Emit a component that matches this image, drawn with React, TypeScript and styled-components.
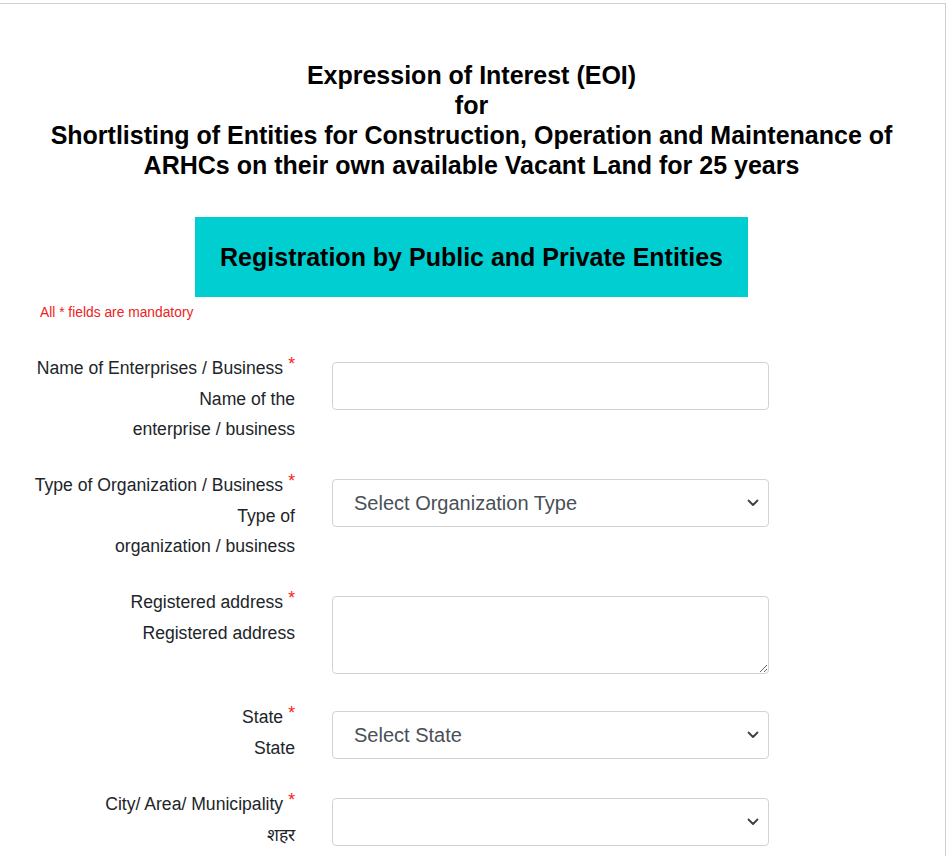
import styled, { createGlobalStyle } from 'styled-components';

const GlobalStyle = createGlobalStyle`
    body {
        margin: 0;
        background: #fff;
        font-family: "Liberation Sans", Arial, sans-serif;
        color: #212529;
    }
`;

const Page = styled.div`
    box-sizing: border-box;
    width: 948px;
    margin: 3px 0 0 -2px;
    min-height: 860px;
    border-top: 1px solid #cfcfcf;
    border-right: 1px solid #cfcfcf;
    padding-top: 56px;
`;

const Title = styled.h1`
    margin: 0;
    text-align: center;
    font-size: 25px;
    line-height: 30px;
    font-weight: bold;
    color: #000;
`;

const Banner = styled.div`
    width: 553px;
    height: 80px;
    margin: 37px auto 0;
    background: #00ced1;
    display: flex;
    align-items: center;
    justify-content: center;
    font-size: 25px;
    font-weight: bold;
    color: #000;
`;

const Mandatory = styled.p`
    margin: 7px 0 0 42px;
    font-size: 13.8px;
    line-height: 18px;
    color: #ee2222;
`;

const Form = styled.form`
    margin-top: 34px;
`;

const Row = styled.div`
    display: flex;
    align-items: flex-start;
    gap: 37px;
    margin-bottom: 29px;
`;

const LabelCol = styled.div`
    width: 282px;
    margin-left: 15px;
    text-align: right;
    font-size: 17.6px;
`;

const MainLabel = styled.label`
    display: block;
    line-height: 24px;
`;

const Star = styled.span`
    color: #ff1a1a;
    margin-left: 5px;
    position: relative;
    top: -4px;
`;

const SubLabel = styled.div`
    margin-top: 4px;
    line-height: 30px;
`;

const Field = styled.div`
    position: relative;
    width: 437px;
    margin-top: 6px;
`;

const controlBase = `
    box-sizing: border-box;
    width: 100%;
    border: 1px solid #ced4da;
    border-radius: 4px;
    background: #fff;
    font-family: "Liberation Sans", Arial, sans-serif;
    font-size: 20px;
    color: #495057;
    outline: none;
`;

const TextInput = styled.input`
    ${controlBase}
    display: block;
    height: 48px;
    padding: 0 16px;
`;

const TextArea = styled.textarea`
    ${controlBase}
    display: block;
    height: 78px;
    margin-bottom: 2px;
    padding: 8px 16px;
    resize: both;
`;

const Select = styled.select`
    ${controlBase}
    display: block;
    height: 48px;
    padding: 0 40px 0 21px;
    appearance: none;
    -webkit-appearance: none;
`;

const Chevron = styled.svg`
    position: absolute;
    right: 10px;
    top: 50%;
    margin-top: -4px;
    pointer-events: none;
`;

function Arrow() {
    return (
        <Chevron width="12" height="8" viewBox="0 0 12 8">
            <path d="M1.5 1.5 L6 6 L10.5 1.5" fill="none" stroke="#3c4043" strokeWidth="1.8" strokeLinecap="round" strokeLinejoin="round" />
        </Chevron>
    );
}

function Label({ text, sub }: { text: string; sub: React.ReactNode }) {
    return (
        <LabelCol>
            <MainLabel>{text}<Star>*</Star></MainLabel>
            <SubLabel>{sub}</SubLabel>
        </LabelCol>
    );
}

export default function App() {
    return (
        <>
            <GlobalStyle />
            <Page>
                <Title>
                    Expression of Interest (EOI)<br />
                    for<br />
                    Shortlisting of Entities for Construction, Operation and Maintenance of<br />
                    ARHCs on their own available Vacant Land for 25 years
                </Title>
                <Banner>Registration by Public and Private Entities</Banner>
                <Mandatory>All * fields are mandatory</Mandatory>
                <Form>
                    <Row>
                        <Label text="Name of Enterprises / Business" sub={<>Name of the<br />enterprise / business</>} />
                        <Field>
                            <TextInput type="text" />
                        </Field>
                    </Row>
                    <Row>
                        <Label text="Type of Organization / Business" sub={<>Type of<br />organization / business</>} />
                        <Field>
                            <Select defaultValue="">
                                <option value="">Select Organization Type</option>
                            </Select>
                            <Arrow />
                        </Field>
                    </Row>
                    <Row>
                        <Label text="Registered address" sub="Registered address" />
                        <Field>
                            <TextArea />
                        </Field>
                    </Row>
                    <Row>
                        <Label text="State" sub="State" />
                        <Field>
                            <Select defaultValue="">
                                <option value="">Select State</option>
                            </Select>
                            <Arrow />
                        </Field>
                    </Row>
                    <Row>
                        <Label text="City/ Area/ Municipality" sub="शहर" />
                        <Field>
                            <Select defaultValue="">
                                <option value=""></option>
                            </Select>
                            <Arrow />
                        </Field>
                    </Row>
                </Form>
            </Page>
        </>
    );
}
